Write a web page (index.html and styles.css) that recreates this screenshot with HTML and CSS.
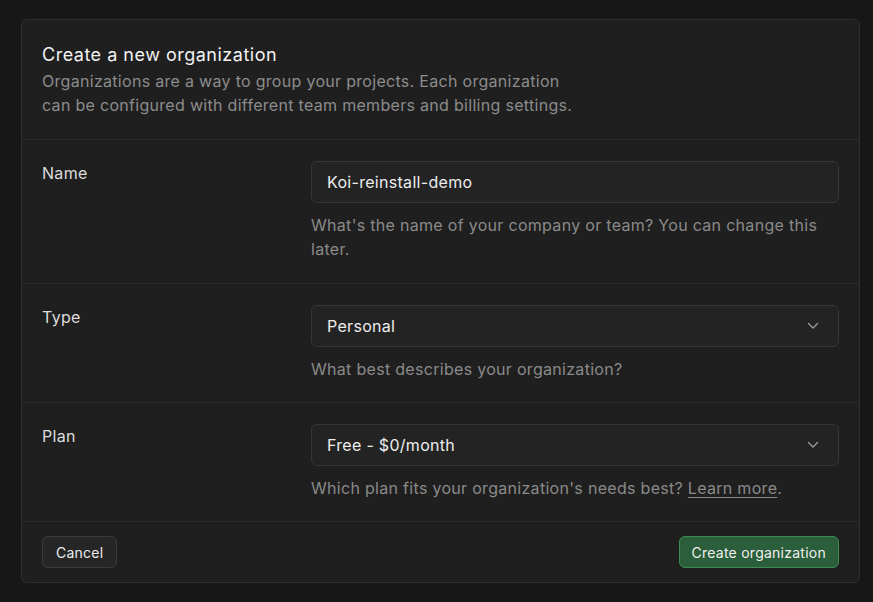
FILE: index.html
```html
<!DOCTYPE html>
<html lang="en">
<head>
<meta charset="utf-8">
<title>Create a new organization</title>
<link rel="stylesheet" href="styles.css">
</head>
<body>
<div class="page">
  <form class="card">
    <div class="card-header">
      <h1 class="title">Create a new organization</h1>
      <p class="desc">Organizations are a way to group your projects. Each organization<br>can be configured with different team members and billing settings.</p>
    </div>

    <div class="row row-name">
      <label class="label">Name</label>
      <div class="field">
        <div class="input">Koi-reinstall-demo</div>
        <p class="help">What's the name of your company or team? You can change this later.</p>
      </div>
    </div>

    <div class="row">
      <label class="label">Type</label>
      <div class="field">
        <div class="input select">
          <span>Personal</span>
          <svg class="chev" width="12" height="8" viewBox="0 0 12 8"><path d="M1.5 1.5 6 6l4.5-4.5" fill="none" stroke="#9a9a9a" stroke-width="1.4" stroke-linecap="round" stroke-linejoin="round"/></svg>
        </div>
        <p class="help">What best describes your organization?</p>
      </div>
    </div>

    <div class="row">
      <label class="label">Plan</label>
      <div class="field">
        <div class="input select">
          <span>Free - $0/month</span>
          <svg class="chev" width="12" height="8" viewBox="0 0 12 8"><path d="M1.5 1.5 6 6l4.5-4.5" fill="none" stroke="#9a9a9a" stroke-width="1.4" stroke-linecap="round" stroke-linejoin="round"/></svg>
        </div>
        <p class="help">Which plan fits your organization's needs best? <a class="link" href="#">Learn more</a>.</p>
      </div>
    </div>

    <div class="footer">
      <button type="button" class="btn btn-default">Cancel</button>
      <button type="button" class="btn btn-primary">Create organization</button>
    </div>
  </form>
</div>
</body>
</html>
```

FILE: styles.css
```css
* { box-sizing: border-box; }
html, body { margin: 0; padding: 0; }
body {
  background: #171717;
  font-family: Inter, "Noto Sans", sans-serif;
  color: #ededed;
  width: 873px;
  height: 602px;
  overflow: hidden;
}
.page {
  padding: 19px 13px 0 21px;
}
.card {
  background: #1f1f1f;
  border: 1px solid #2e2e2e;
  border-radius: 6px;
  height: 564px;
  display: flex;
  flex-direction: column;
}
.card-header {
  padding: 21px 20px 22px;
}
.title {
  margin: 0;
  font-size: 18px;
  line-height: 28px;
  font-weight: 400;
  letter-spacing: 0.5px;
  color: #f2f2f2;
}
.desc {
  margin: 0;
  font-size: 16px;
  line-height: 24px;
  letter-spacing: 0.3px;
  color: #8c8c8c;
}
.row {
  border-top: 1px solid #2a2a2a;
  display: grid;
  grid-template-columns: 269px 1fr;
  padding: 21px 20px 21px 20px;
}
.row-name { padding-bottom: 22px; }
.label {
  font-size: 16px;
  line-height: 24px;
  letter-spacing: 0.3px;
  color: #dcdcdc;
}
.field { display: flex; flex-direction: column; }
.input {
  height: 42px;
  border: 1px solid #363636;
  border-radius: 6px;
  background: #232323;
  padding: 0 15px;
  display: flex;
  align-items: center;
  font-size: 16px;
  letter-spacing: 0.3px;
  color: #ededed;
}
.select { justify-content: space-between; padding-right: 19px; }
.chev { display: block; }
.help {
  margin: 10px 0 0;
  font-size: 16px;
  line-height: 24px;
  letter-spacing: 0.3px;
  color: #8a8a8a;
}
.link {
  color: #8a8a8a;
  text-decoration: underline;
  text-underline-offset: 3px;
}
.footer {
  margin-top: auto;
  border-top: 1px solid #2a2a2a;
  padding: 14px 20px 0;
  height: 62px;
  display: flex;
  justify-content: space-between;
  align-items: flex-start;
}
.btn {
  height: 32px;
  border-radius: 6px;
  font-family: inherit;
  font-size: 14px;
  letter-spacing: 0.25px;
  padding: 0 12px;
  cursor: pointer;
}
.btn-default {
  background: #262626;
  border: 1px solid #3a3a3a;
  color: #ededed;
  padding: 0 13px;
}
.btn-primary {
  background: #2b5e3a;
  border: 1px solid #3e8c54;
  color: #f0f0f0;
}
```
